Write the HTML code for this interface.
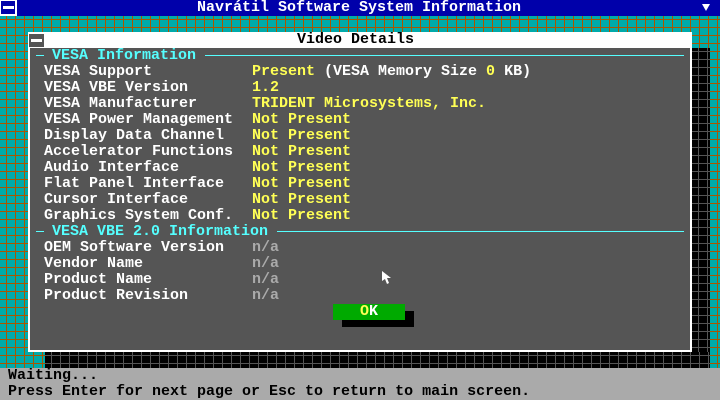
<!DOCTYPE html>
<html><head><meta charset="utf-8"><style>
*{margin:0;padding:0}
body{width:720px;height:400px;overflow:hidden;position:relative;font-family:"Liberation Mono",monospace;font-size:15px;font-weight:bold;line-height:16px;
background-color:#00aaaa;
background-image:linear-gradient(to right,#aa5500 1px,transparent 1px),linear-gradient(to bottom,#aa5500 1px,transparent 1px);
background-size:9px 8px;background-position:6px 3px}
.abs{position:absolute;white-space:pre}
#top{left:0;top:0;width:720px;height:16px;background:#0000aa;color:#fff}
#status{left:0;top:368px;width:720px;height:32px;background:#aaaaaa;color:#000}
.shadow{background-color:#000;background-image:linear-gradient(to right,#555 1px,transparent 1px),linear-gradient(to bottom,#555 1px,transparent 1px);background-size:9px 8px;background-position:6px 3px}
#dlg{left:28px;top:32px;width:664px;height:320px;background:#fff}
#body{left:30px;top:48px;width:660px;height:302px;background:#555555}
.w{color:#fff}.y{color:#ffff55}.g{color:#aaaaaa}.c{color:#55ffff}
.line{position:absolute;height:1px;background:#55ffff}
</style></head><body>
<div class="abs" id="top"></div>
<div class="abs" style="left:0;top:0;width:14px;height:13px;border:1px solid #fff;border-width:1px 2px 2px 1px;background:#0000aa"></div>
<div class="abs" style="left:3px;top:6px;width:11px;height:3px;background:#fff"></div>
<div class="abs" style="left:197px;top:0;color:#fff">Navrátil Software System Information</div>
<svg class="abs" style="left:702px;top:3px" width="10" height="10"><path d="M0 1H8L4 8Z" fill="#fff"/></svg>

<div class="abs shadow" style="left:692px;top:48px;width:18px;height:320px"></div>
<div class="abs shadow" style="left:45px;top:352px;width:665px;height:16px"></div>
<div class="abs" id="dlg"></div>
<div class="abs" style="left:29px;top:34px;width:15px;height:13px;background:#555"></div>
<div class="abs" style="left:31px;top:39px;width:11px;height:3px;background:#fff"></div>
<div class="abs" style="left:297px;top:32px;color:#000">Video Details</div>
<div class="abs" id="body"></div>

<div class="line" style="left:36px;top:55px;width:8px"></div>
<div class="abs c" style="left:52px;top:48px">VESA Information</div>
<div class="line" style="left:205px;top:55px;width:479px"></div>
<div class="line" style="left:36px;top:231px;width:8px"></div>
<div class="abs c" style="left:52px;top:224px">VESA VBE 2.0 Information</div>
<div class="line" style="left:277px;top:231px;width:407px"></div>

<div class="abs w" style="left:44px;top:64px">VESA Support
VESA VBE Version
VESA Manufacturer
VESA Power Management
Display Data Channel
Accelerator Functions
Audio Interface
Flat Panel Interface
Cursor Interface
Graphics System Conf.</div>
<div class="abs y" style="left:252px;top:64px">Present <span class="w">(VESA Memory Size </span>0<span class="w"> KB)</span>
1.2
TRIDENT Microsystems, Inc.
Not Present
Not Present
Not Present
Not Present
Not Present
Not Present
Not Present</div>
<div class="abs w" style="left:44px;top:240px">OEM Software Version
Vendor Name
Product Name
Product Revision</div>
<div class="abs g" style="left:252px;top:240px">n/a
n/a
n/a
n/a</div>

<div class="abs" style="left:342px;top:311px;width:72px;height:16px;background:#000"></div>
<div class="abs" style="left:333px;top:304px;width:72px;height:16px;background:#00aa00"></div>
<div class="abs" style="left:360px;top:304px"><span class="y">O</span><span class="w">K</span></div>

<svg class="abs" style="left:382px;top:271px" width="10" height="14"><path d="M0 0V10L3 8L5 13L7 12L5 7H9Z" fill="#fff"/></svg>

<div class="abs" id="status"></div>
<div class="abs" style="left:8px;top:368px;color:#000">Waiting...
Press Enter for next page or Esc to return to main screen.</div>
</body></html>
